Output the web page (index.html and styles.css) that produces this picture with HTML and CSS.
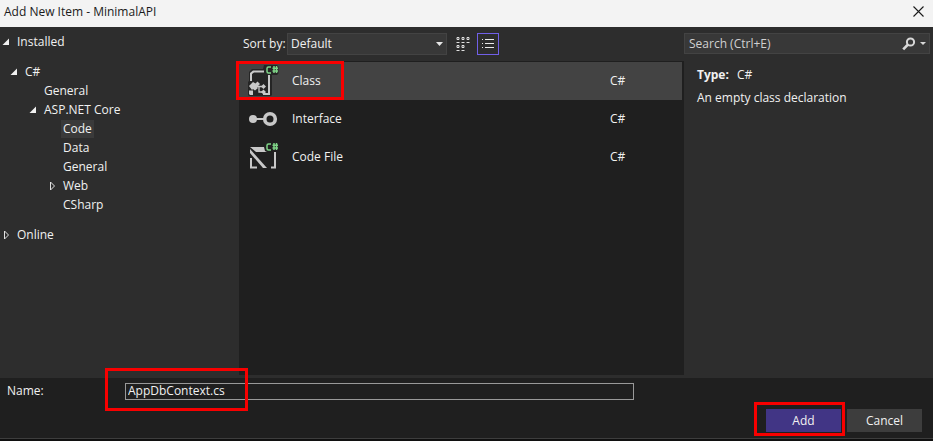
FILE: index.html
```html
<!DOCTYPE html>
<html lang="en">
<head>
<meta charset="utf-8">
<title>Add New Item - MinimalAPI</title>
<link rel="stylesheet" href="styles.css">
</head>
<body>
<div class="dialog">
  <header class="titlebar">
    <h1 class="title">Add New Item - MinimalAPI</h1>
    <button class="close" type="button" aria-label="Close">
      <svg width="11" height="11" viewBox="0 0 11 11"><path d="M.5 .5l10 10M10.500 .5l-10 10" stroke="#1a1a1a" stroke-width="1.1" fill="none"/></svg>
    </button>
  </header>

  <main class="content">
    <nav class="tree" aria-label="Categories">
      <ul class="branch">
        <li class="node level-0"><svg class="arrow" viewBox="0 0 8 8"><path d="M7 .5V7H.5z" fill="#f1f1f1"/></svg><span class="label">Installed</span></li>
        <li class="node level-1 group"><svg class="arrow" viewBox="0 0 8 8"><path d="M7 .5V7H.5z" fill="#f1f1f1"/></svg><span class="label">C#</span></li>
        <li class="node level-2"><span class="arrow"></span><span class="label">General</span></li>
        <li class="node level-2"><svg class="arrow" viewBox="0 0 8 8"><path d="M7 .5V7H.5z" fill="#f1f1f1"/></svg><span class="label">ASP.NET Core</span></li>
        <li class="node level-3"><span class="arrow"></span><span class="label current">Code</span></li>
        <li class="node level-3"><span class="arrow"></span><span class="label">Data</span></li>
        <li class="node level-3"><span class="arrow"></span><span class="label">General</span></li>
        <li class="node level-3"><svg class="arrow" viewBox="0 0 8 10"><path d="M2.500 1v8l4-4z" fill="none" stroke="#e0e0e0"/></svg><span class="label">Web</span></li>
        <li class="node level-3"><span class="arrow"></span><span class="label">CSharp</span></li>
        <li class="node level-0 group"><svg class="arrow" viewBox="0 0 8 10"><path d="M2.500 1v8l4-4z" fill="none" stroke="#e0e0e0"/></svg><span class="label">Online</span></li>
      </ul>
    </nav>

    <section class="templates">
      <div class="toolbar">
        <label class="sort-label" for="sort">Sort by:</label>
        <div class="select-wrap">
          <select id="sort" class="sort"><option>Default</option></select>
          <svg class="caret" width="7" height="4" viewBox="0 0 7 4"><path d="M0 0h7L3.500 4z" fill="#e6e6e6"/></svg>
        </div>
        <button class="view" type="button" aria-label="Small icons">
          <svg width="14" height="14" viewBox="0 0 14 14" fill="none" stroke="#e0e0e0"><path d="M1 .5h2v2h-2zM6 .5h2v2h-2zM11 .5h2v2h-2zM1 8.500h2v2h-2zM6 8.500h2v2h-2z" /><path d="M.5 5.500h3M5.500 5.500h3M10.500 5.500h3M.5 13.500h3M5.500 13.500h3"/></svg>
        </button>
        <button class="view active" type="button" aria-label="List">
          <svg width="12" height="10" viewBox="0 0 12 10" fill="none" stroke="#e8e8e8"><path d="M0 .5h1M3 .5h9M0 4.500h1M3 4.500h9M0 8.500h1M3 8.500h9"/></svg>
        </button>
      </div>
      <ul class="items">
        <li>
          <button class="item selected" type="button">
            <svg class="icon" width="32" height="32" viewBox="0 0 32 32">
              <path d="M2 7l3-3h11l1-4h13l1.500 1.500v7L30 10h-5v20l-1 1H2L1 30V17l1-1z" fill="#252525"/>
              <path d="M3 16V8l3-2.500h11v2H7L5 9v7zM21 10h2v20h-7v-2h5z" fill="#c8c8c8"/>
              <path d="M2 21l4-4 2.500 1.500 2-2 2.500 2.500-3 3 1 1-3 2.500-2-1.500-1 1z" fill="#c8c8c8"/>
              <path d="M10 21.500h5M12 21v6h3" fill="none" stroke="#c8c8c8" stroke-width="1.300"/>
              <path d="M14 27l2.500-2.500L19 27l-2.500 2.500zM2 25.500h4V30H3l-1-1zM14 21.500l2.500-2.500 2.500 2.500-2.500 2.500z" fill="#c8c8c8"/>
              <path d="M24 2h-2.500Q20 2 20 3.500v3Q20 8 21.500 8H24M27 1v7M29.500 1v7M25.500 3.200H31M25.500 6H31" fill="none" stroke="#7fd487" stroke-width="1.500"/>
            </svg>
            <span class="name">Class</span><span class="lang">C#</span>
          </button>
          <span class="marker marker-item"></span>
        </li>
        <li>
          <button class="item" type="button">
            <svg class="icon" width="32" height="32" viewBox="0 0 32 32">
              <circle cx="6" cy="16" r="4" fill="#c8c8c8"/><path d="M9 16h8" stroke="#c8c8c8" stroke-width="2"/>
              <circle cx="23" cy="16" r="5.300" fill="none" stroke="#c8c8c8" stroke-width="3.600"/>
            </svg>
            <span class="name">Interface</span><span class="lang">C#</span>
          </button>
        </li>
        <li>
          <button class="item" type="button">
            <svg class="icon" width="32" height="32" viewBox="0 0 32 32">
              <path d="M3 6h14l1 4 2 1H9z" fill="#c8c8c8"/>
              <path d="M3 8v4l13 15h4z" fill="#c8c8c8"/>
              <path d="M4 17v9.500h6M28 11v15.500h-4" fill="none" stroke="#c8c8c8" stroke-width="2"/>
              <path d="M24 3h-2.500Q20 3 20 4.500v3Q20 9 21.500 9H24M27 2v7M29.500 2v7M25.500 4.200H31M25.500 7H31" fill="none" stroke="#7fd487" stroke-width="1.500"/>
            </svg>
            <span class="name">Code File</span><span class="lang">C#</span>
          </button>
        </li>
      </ul>
    </section>

    <aside class="details">
      <div class="search">
        <input class="search-input" type="search" placeholder="Search (Ctrl+E)" aria-label="Search">
        <button class="search-button" type="button" aria-label="Search options">
          <svg width="24" height="14" viewBox="0 0 24 14"><circle cx="8.500" cy="5" r="3.600" fill="none" stroke="#d8d8d8" stroke-width="2"/><path d="M6 7.500L1.200 12.300" stroke="#d8d8d8" stroke-width="2.600"/><path d="M18 5h6l-3 3z" fill="#d8d8d8"/></svg>
        </button>
      </div>
      <div class="info">
        <p class="type"><strong>Type:</strong><span>C#</span></p>
        <p class="description">An empty class declaration</p>
      </div>
    </aside>
  </main>

  <footer class="footer">
    <div class="name-row">
      <label class="name-label" for="name">Name:</label>
      <div class="name-field">
        <input id="name" class="name-input" type="text" value="AppDbContext.cs">
        <span class="marker marker-name"></span>
      </div>
    </div>
    <div class="actions">
      <div class="action">
        <button class="button primary" type="button">Add</button>
        <span class="marker marker-add"></span>
      </div>
      <div class="action"><button class="button" type="button">Cancel</button></div>
    </div>
  </footer>
</div>
</body>
</html>
```
FILE: styles.css
```css
* { box-sizing: border-box; }

body {
  margin: 0;
  background: #101010;
  color: #f1f1f1;
  font: 12px/18px "Open Sans", "Noto Sans", sans-serif;
}

button, input, select { font: inherit; color: inherit; }
button { padding: 0; border: 0; background: none; }
ul { margin: 0; padding: 0; list-style: none; }
h1, p { margin: 0; }
svg { display: block; }

.dialog {
  display: flex;
  flex-direction: column;
  min-height: 100vh;
  border-bottom: 2px solid #101010;
}

.titlebar {
  display: flex;
  align-items: center;
  justify-content: space-between;
  padding: 0 9px 4px 4px;
  height: 27px;
  background: #f3f3f3;
  color: #1a1a1a;
}
.title { font-size: 12px; font-weight: 400; }

.content {
  flex: 1;
  display: grid;
  grid-template-columns: 239px 1fr 249px;
  background: #2d2d2d;
}

.tree { padding-top: 5px; }
.node { display: flex; align-items: center; height: 19px; }
.node.group { margin-top: 11px; }
.arrow { flex: none; width: 8px; height: 10px; margin-right: 5px; }
.label { padding: 0 2px; }
.label.current { background: #3a3a3a; }
.level-0 { padding-left: 2px; }
.level-1 { padding-left: 10px; }
.level-2 { padding-left: 29px; }
.level-3 { padding-left: 48px; }

.templates { display: flex; flex-direction: column; padding-bottom: 3px; }
.toolbar {
  display: flex;
  align-items: center;
  height: 34px;
  padding-left: 4px;
}
.sort-label { width: 44px; white-space: nowrap; }
.select-wrap { position: relative; width: 160px; }
.sort {
  display: block;
  width: 100%;
  height: 22px;
  padding: 0 3px;
  border: 1px solid #434343;
  border-radius: 0;
  background: #383838;
  appearance: none;
}
.caret { position: absolute; right: 4px; top: 9px; pointer-events: none; }
.view {
  display: grid;
  place-items: center;
  width: 22px;
  height: 22px;
  margin-left: 5px;
}
.view + .view { margin-left: 3px; }
.view.active { border: 1px solid #7160e8; }

.items { flex: 1; padding: 1px 2px 0 0; background: #1f1f1f; }
.items li { position: relative; }
.item {
  display: flex;
  align-items: center;
  width: 100%;
  height: 38px;
  padding-left: 8px;
  text-align: left;
}
.item.selected { background: #434343; }
.icon { flex: none; margin-right: 13px; overflow: visible; }
.name { flex: 1; }
.lang { width: 72px; }

.details { padding-top: 6px; }
.search {
  display: flex;
  align-items: center;
  height: 21px;
  margin-right: 3px;
  border: 1px solid #434343;
  background: #383838;
}
.search-input {
  flex: 1;
  min-width: 0;
  padding: 0 4px;
  border: 0;
  background: none;
  appearance: none;
}
.search-input::placeholder { color: #d0d0d0; opacity: 1; }
.search-button { padding-right: 3px; }
.info { display: grid; gap: 5px; padding: 12px 13px; }
.type span { margin-left: 8px; }

.footer { background: #1f1f1f; border-bottom: 1px solid #3d3d3d; padding: 4px 11px 6px 7px; }
.name-row { display: flex; align-items: center; }
.name-label { width: 118px; }
.name-field { position: relative; flex: 0 1 509px; }
.name-input {
  display: block;
  width: 100%;
  height: 17px;
  padding: 0 2px;
  border: 1px solid #999;
  background: #1f1f1f;
}
.actions { display: flex; justify-content: flex-end; gap: 6px; margin-top: 9px; }
.action { position: relative; }
.button { display: block; width: 75px; height: 23px; background: #3d3d3d; }
.button.primary { background: #413585; }

.marker {
  position: absolute;
  border: 3px solid #f80000;
  pointer-events: none;
}
.marker-item { left: -3px; top: -1px; width: 108px; height: 39px; z-index: 1; }
.marker-name { left: -20px; top: -15px; width: 143px; height: 43px; }
.marker-add { left: -12px; top: -7px; width: 91px; height: 34px; }
```
